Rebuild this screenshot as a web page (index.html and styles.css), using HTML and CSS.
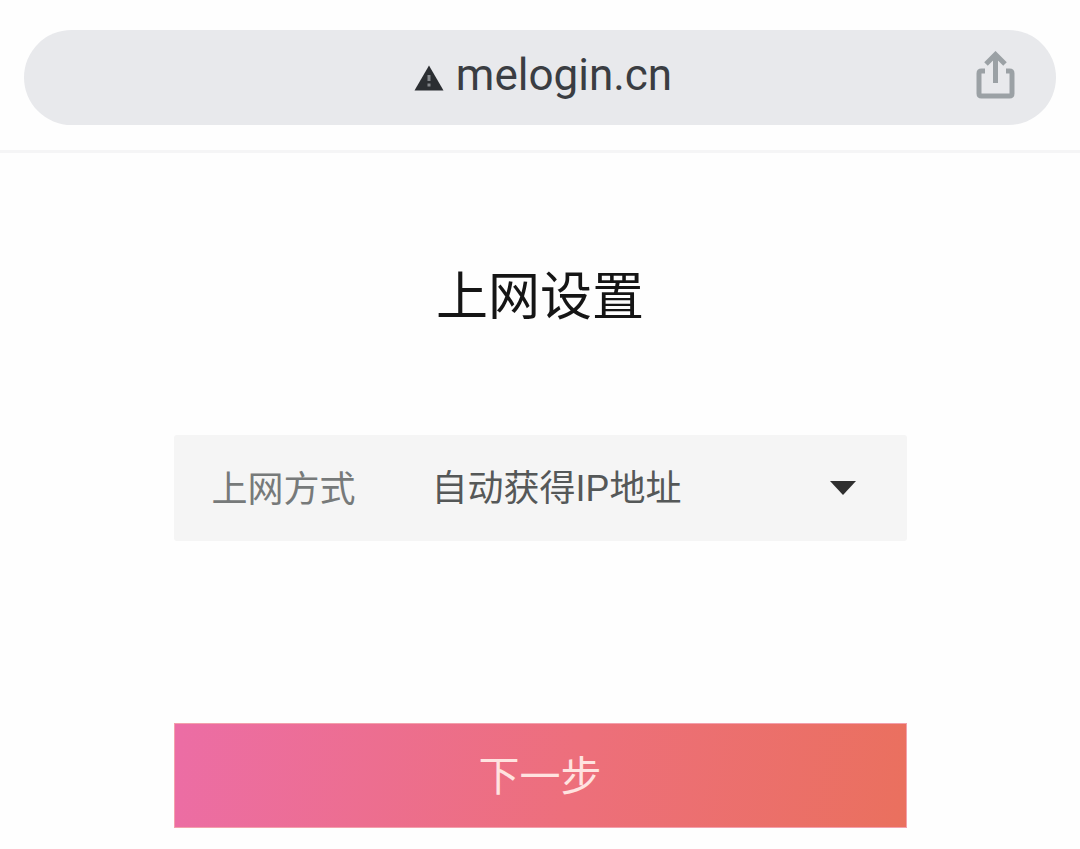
FILE: index.html
```html
<!DOCTYPE html>
<html lang="zh-CN">
<head>
<meta charset="utf-8">
<meta name="viewport" content="width=device-width, initial-scale=1">
<title>上网设置</title>
<link rel="stylesheet" href="styles.css">
</head>
<body>
<header class="browser-bar">
  <div class="address">
    <div class="site">
      <svg class="warning" viewBox="0 0 30 26" aria-hidden="true">
        <path d="M15 0.5 29.5 25.5H0.5Z" fill="#2b2e32"/>
        <path d="M15 10v6M15 18.500v3" stroke="#85888c" stroke-width="3"/>
      </svg>
      <span class="host">melogin.cn</span>
    </div>
    <button class="share" type="button" aria-label="分享">
      <svg class="share-icon" viewBox="0 0 40 48" fill="none" stroke="#9ba1a5" stroke-width="5" aria-hidden="true">
        <path d="M9 20H5.500Q3 20 3 22.500V42.500Q3 45 5.500 45H33.500Q36 45 36 42.500V22.500Q36 20 33.500 20H30"/>
        <path d="M19.500 32V5M10 13 19.500 3.500 29 13"/>
      </svg>
    </button>
  </div>
</header>
<main class="page">
  <h1 class="title">上网设置</h1>
  <form class="setup">
    <div class="field">
      <label class="field-label" for="mode">上网方式</label>
      <select class="field-select" id="mode">
        <option>自动获得IP地址</option>
      </select>
      <svg class="caret" viewBox="0 0 26 14" aria-hidden="true"><path d="M0 0H26L13 14Z" fill="#2f2f2f"/></svg>
    </div>
    <button class="next" type="button">下一步</button>
  </form>
</main>
</body>
</html>
```
FILE: styles.css
```css
* {
  box-sizing: border-box;
}

body {
  margin: 0;
  background: #fefefe;
  font-family: "Liberation Sans", "Noto Sans CJK SC", sans-serif;
}

.browser-bar {
  padding: 30px 24px 25px;
  border-bottom: 3px solid #f5f5f6;
}

.address {
  display: grid;
  grid-template-columns: 1fr auto 1fr;
  align-items: center;
  height: 95px;
  padding: 0 40px 6px;
  border-radius: 48px;
  background: #e8e9ec;
}

.site {
  display: flex;
  grid-column: 2;
  align-items: center;
  gap: 12px;
  padding-left: 6px;
}

.warning {
  width: 30px;
  height: 26px;
  margin-top: 6px;
}

.host {
  color: #3a3d42;
  font-family: Roboto, sans-serif;
  font-size: 44px;
  line-height: 52px;
}

.share {
  justify-self: end;
  padding: 0;
  border: 0;
  background: none;
}

.share-icon {
  display: block;
  width: 40px;
  height: 48px;
}

.page {
  max-width: 733px;
  margin: 0 auto;
  padding: 104px 0 20px;
}

.title {
  margin: 0;
  color: #151515;
  font-size: 52px;
  font-weight: 400;
  line-height: 80px;
  text-align: center;
}

.setup {
  display: flex;
  flex-direction: column;
  gap: 182px;
  margin-top: 98px;
}

.field {
  display: grid;
  grid-template-columns: 220px 1fr;
  align-items: center;
  height: 106px;
  padding-left: 38px;
  border-radius: 3px;
  background: #f5f5f5;
  font-size: 36px;
}

.field-label {
  padding-bottom: 4px;
  color: #777a7a;
}

.field-select {
  grid-area: 1 / 2;
  width: 100%;
  height: 100%;
  padding: 0;
  border: 0;
  appearance: none;
  background: none;
  color: #555858;
  font: inherit;
}

.caret {
  grid-area: 1 / 2;
  justify-self: end;
  width: 26px;
  height: 14px;
  margin-right: 51px;
  pointer-events: none;
}

.next {
  height: 105px;
  padding: 0 0 6px;
  border: 1px solid #f3a0ac;
  background: linear-gradient(100deg, #ec6da5, #ed6f7b 55%, #ea705e);
  color: #ffe3e0;
  font-family: inherit;
  font-size: 41px;
}
```
